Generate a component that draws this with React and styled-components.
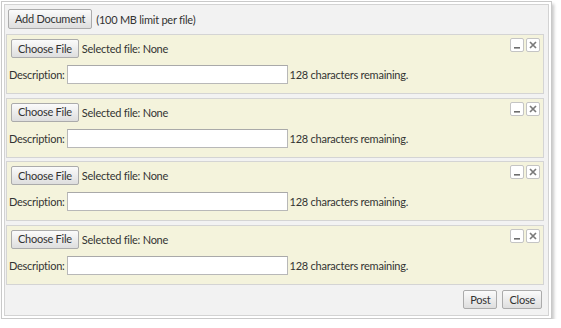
import React from "react";
import styled, { createGlobalStyle } from "styled-components";

const Global = createGlobalStyle`
  html, body { margin: 0; padding: 0; background: #ffffff; }
  body {
    font-family: Lato, "Open Sans", "Liberation Sans", sans-serif;
    font-size: 11px;
    letter-spacing: -0.25px;
    color: #333;
  }
`;

const Frame = styled.div`
  margin: 1px 0 0 1px;
  width: 551px;
  height: 318px;
  border: 1px solid #c9c9c9;
  background: #ffffff;
  padding: 2px;
  box-sizing: border-box;
  box-shadow: 2px 3px 3px rgba(0, 0, 0, 0.22);
`;

const Inner = styled.div`
  height: 100%;
  box-sizing: border-box;
  border: 1px solid #d3d3d3;
  background: #f2f2f2;
  padding: 4px 4px 0 1px;
  display: flex;
  flex-direction: column;
`;

const Toolbar = styled.div`
  display: flex;
  align-items: center;
  gap: 4px;
  padding-left: 2px;
  height: 20px;
  margin-bottom: 5px;
`;

const Button = styled.button`
  font-family: inherit;
  font-size: 11px;
  letter-spacing: -0.25px;
  color: #333;
  height: ${(p) => p.$h || 19}px;
  padding: 0 ${(p) => p.$px || 6}px 1px;
  border: 1px solid #ababab;
  border-radius: 2px;
  background: linear-gradient(#fbfbfb, #dedede);
  line-height: 1;
  cursor: pointer;
`;

const Note = styled.span`
  color: #333;
`;

const Panel = styled.div`
  position: relative;
  height: 60px;
  box-sizing: border-box;
  border: 1px solid #d4d4d4;
  background: #f4f3dc;
  padding: 4px 4px 0 4px;
  margin-bottom: 3.5px;
`;

const FileRow = styled.div`
  display: flex;
  align-items: center;
  gap: 3px;
  height: 19px;
`;

const DescRow = styled.div`
  display: flex;
  align-items: center;
  margin-top: 7px;
  margin-left: -2px;
  height: 19px;
`;

const Label = styled.span`
  margin-right: 2px;
`;

const Input = styled.input`
  width: 221px;
  height: 19px;
  box-sizing: border-box;
  border: 1px solid #b8b8b8;
  border-top-color: #a9a9a9;
  background: #fff;
  margin: 0 2px 0 0;
  padding: 0 3px;
  font-family: inherit;
  font-size: 11px;
`;

const WinButtons = styled.div`
  position: absolute;
  top: 3px;
  right: 3px;
  display: flex;
  gap: 2px;
`;

const WinBtn = styled.div`
  width: 14px;
  height: 14px;
  box-sizing: border-box;
  border: 1px solid #c4c4c4;
  border-radius: 2px;
  background: #fff;
  display: flex;
  align-items: center;
  justify-content: center;
`;

const Footer = styled.div`
  display: flex;
  justify-content: flex-end;
  gap: 5px;
  margin-top: 2px;
  padding-right: 2px;
`;

function Minimize() {
  return (
    <svg width="8" height="8" viewBox="0 0 8 8">
      <rect x="1" y="6" width="6" height="1.6" fill="#6e6e6e" />
    </svg>
  );
}

function CloseIcon() {
  return (
    <svg width="8" height="8" viewBox="0 0 8 8">
      <path d="M1 1 L7 7 M7 1 L1 7" stroke="#7a7a7a" strokeWidth="1.7" />
    </svg>
  );
}

function FilePanel() {
  return (
    <Panel>
      <FileRow>
        <Button $px={6}>Choose File</Button>
        <span>Selected file: None</span>
      </FileRow>
      <DescRow>
        <Label>Description:</Label>
        <Input type="text" />
        <span>128 characters remaining.</span>
      </DescRow>
      <WinButtons>
        <WinBtn><Minimize /></WinBtn>
        <WinBtn><CloseIcon /></WinBtn>
      </WinButtons>
    </Panel>
  );
}

export default function App() {
  return (
    <>
      <Global />
      <Frame>
        <Inner>
          <Toolbar>
            <Button $h={20}>Add Document</Button>
            <Note>(100 MB limit per file)</Note>
          </Toolbar>
          <FilePanel />
          <FilePanel />
          <FilePanel />
          <FilePanel />
          <Footer>
            <Button $px={6}>Post</Button>
            <Button $px={6}>Close</Button>
          </Footer>
        </Inner>
      </Frame>
    </>
  );
}
